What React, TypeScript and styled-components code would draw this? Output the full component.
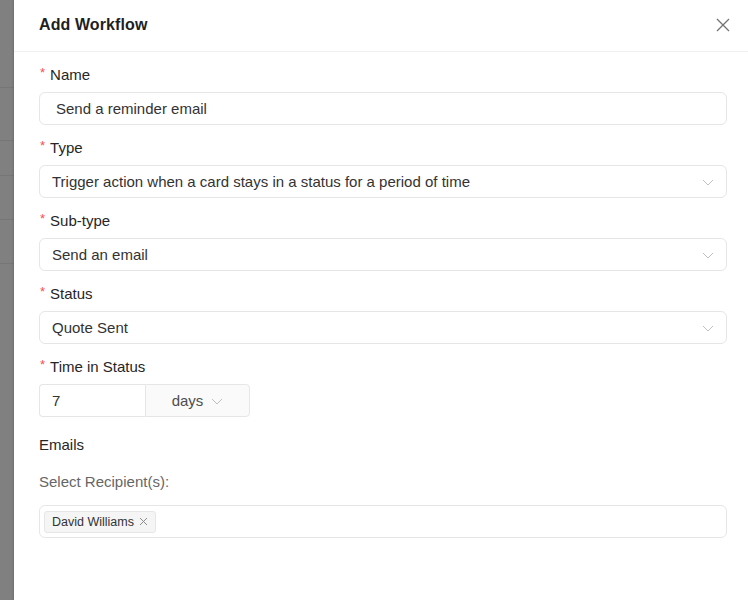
import * as React from 'react';
import styled, { createGlobalStyle } from 'styled-components';

const GlobalStyle = createGlobalStyle`
  *, *::before, *::after {
    box-sizing: border-box;
  }
  html, body {
    margin: 0;
    padding: 0;
    background: #ffffff;
  }
  body {
    font-family: 'Liberation Sans', Arial, sans-serif;
    color: #262626;
    -webkit-font-smoothing: antialiased;
  }
`;

const Page = styled.div`
  display: flex;
  width: 748px;
  height: 600px;
  overflow: hidden;
`;

const Backdrop = styled.div`
  width: 14px;
  flex-shrink: 0;
  background: #808080;
  display: flex;
  flex-direction: column;
`;

interface BackdropRowProps {
  h: number;
}

const BackdropRow = styled.div`
  height: ${(props: BackdropRowProps) => props.h}px;
  border-bottom: 1px solid #767676;
`;

const Drawer = styled.div`
  flex: 1;
  display: flex;
  flex-direction: column;
  background: #ffffff;
  box-shadow: -1px 0 2px rgba(0, 0, 0, 0.15);
`;

const Header = styled.div`
  height: 52px;
  display: flex;
  align-items: center;
  justify-content: space-between;
  padding: 0 17px 0 25px;
  border-bottom: 1px solid #f0f0f0;
`;

const Title = styled.div`
  font-size: 16px;
  font-weight: 600;
  color: #1f1f1f;
  letter-spacing: 0.1px;
  margin-top: -2px;
`;

const CloseButton = styled.div`
  width: 16px;
  height: 16px;
  display: flex;
  align-items: center;
  justify-content: center;
  margin-top: -2px;
  cursor: pointer;
`;

const Body = styled.div`
  padding: 12px 21px 0 25px;
  display: flex;
  flex-direction: column;
`;

const Field = styled.div`
  display: flex;
  flex-direction: column;
  margin-bottom: 12px;
`;

const Label = styled.div`
  height: 22px;
  line-height: 22px;
  font-size: 15px;
  color: #262626;
  margin-bottom: 6px;
  display: flex;
  align-items: center;
`;

const Required = styled.span`
  color: #ff4d4f;
  font-size: 13px;
  margin-right: 5px;
  margin-top: -5px;
  margin-left: 1px;
`;

const Box = styled.div`
  height: 33px;
  border: 1px solid #e6e6e6;
  border-radius: 6px;
  display: flex;
  align-items: center;
  font-size: 15px;
  color: #333333;
  background: #ffffff;
`;

const TextInput = styled(Box)`
  padding: 0 16px;
`;

const Select = styled(Box)`
  padding: 0 12px;
  justify-content: space-between;
`;

const Chevron = () => (
  <svg width="12" height="12" viewBox="0 0 12 12" fill="none">
    <path d="M1 4l5 5 5-5" stroke="#bfbfbf" strokeWidth="1" />
  </svg>
);

const Group = styled.div`
  display: flex;
  width: 211px;
  height: 33px;
`;

const GroupInput = styled.div`
  width: 106px;
  border: 1px solid #e6e6e6;
  border-right: none;
  border-radius: 4px 0 0 4px;
  padding: 0 12px;
  display: flex;
  align-items: center;
  font-size: 15px;
  color: #333333;
`;

const GroupAddon = styled.div`
  flex: 1;
  border: 1px solid #e6e6e6;
  border-radius: 0 4px 4px 0;
  background: #fafafa;
  display: flex;
  align-items: center;
  justify-content: center;
  gap: 8px;
  font-size: 15px;
  color: #4d4d4d;
`;

const Section = styled.div`
  font-size: 15px;
  color: #262626;
  height: 22px;
  line-height: 22px;
  margin-top: 5px;
`;

const SubLabel = styled.div`
  font-size: 15px;
  color: #666666;
  height: 22px;
  line-height: 22px;
  margin-top: 15px;
  margin-bottom: 12px;
`;

const MultiBox = styled(Box)`
  padding: 0 4px;
`;

const Tag = styled.div`
  height: 22px;
  display: flex;
  align-items: center;
  gap: 5px;
  padding: 0 7px;
  background: #f5f5f5;
  border: 1px solid #e6e6e6;
  border-radius: 3px;
  font-size: 12.5px;
  color: #333333;
`;

const backdropRows = [88, 53, 35, 44, 44];

export default function App() {
  return (
    <>
      <GlobalStyle />
      <Page>
        <Backdrop>
          {backdropRows.map((h, i) => (
            <BackdropRow key={i} h={h} />
          ))}
        </Backdrop>
        <Drawer>
          <Header>
            <Title>Add Workflow</Title>
            <CloseButton>
              <svg width="14" height="14" viewBox="0 0 14 14" fill="none">
                <path d="M1 1l12 12M13 1L1 13" stroke="#737373" strokeWidth="1.3" />
              </svg>
            </CloseButton>
          </Header>
          <Body>
            <Field>
              <Label>
                <Required>*</Required>Name
              </Label>
              <TextInput>Send a reminder email</TextInput>
            </Field>
            <Field>
              <Label>
                <Required>*</Required>Type
              </Label>
              <Select>
                <span>Trigger action when a card stays in a status for a period of time</span>
                <Chevron />
              </Select>
            </Field>
            <Field>
              <Label>
                <Required>*</Required>Sub-type
              </Label>
              <Select>
                <span>Send an email</span>
                <Chevron />
              </Select>
            </Field>
            <Field>
              <Label>
                <Required>*</Required>Status
              </Label>
              <Select>
                <span>Quote Sent</span>
                <Chevron />
              </Select>
            </Field>
            <Field>
              <Label>
                <Required>*</Required>Time in Status
              </Label>
              <Group>
                <GroupInput>7</GroupInput>
                <GroupAddon>
                  days
                  <Chevron />
                </GroupAddon>
              </Group>
            </Field>
            <Section>Emails</Section>
            <SubLabel>Select Recipient(s):</SubLabel>
            <MultiBox>
              <Tag>
                David Williams
                <svg width="9" height="9" viewBox="0 0 9 9" fill="none">
                  <path d="M1 1l7 7M8 1L1 8" stroke="#8c8c8c" strokeWidth="1" />
                </svg>
              </Tag>
            </MultiBox>
          </Body>
        </Drawer>
      </Page>
    </>
  );
}
